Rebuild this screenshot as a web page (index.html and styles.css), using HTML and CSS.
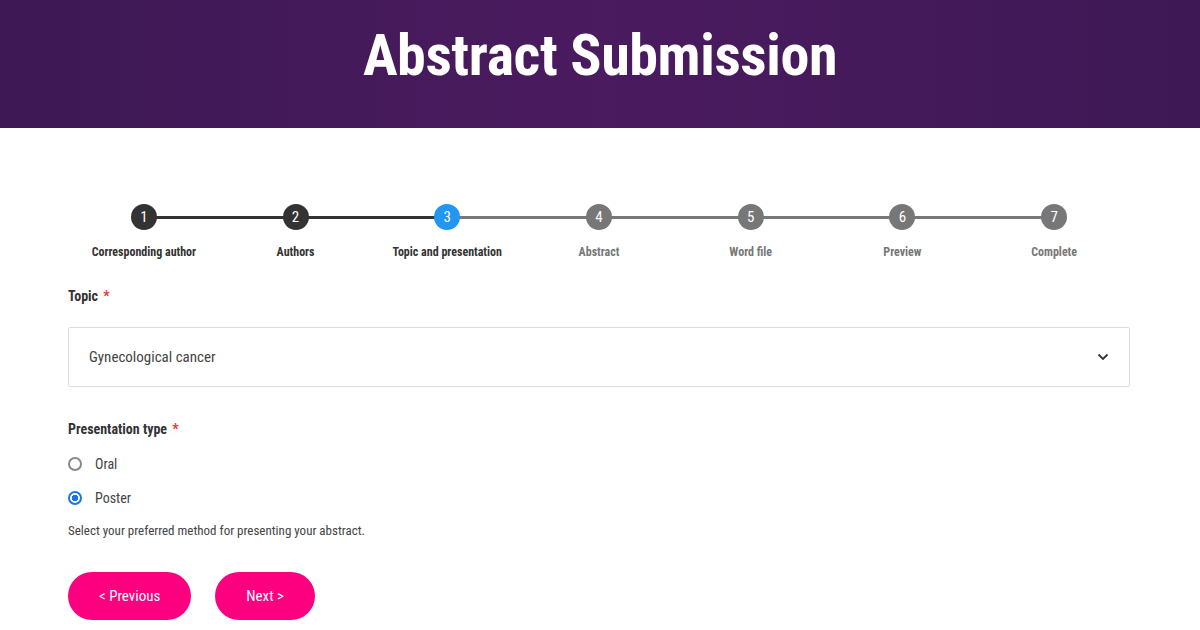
FILE: index.html
```html
<!DOCTYPE html>
<html lang="en">
<head>
  <meta charset="UTF-8" />
  <title>Abstract Submission</title>
  <link rel="stylesheet" href="styles.css">
</head>
<body>

  <header class="page-header">
    <h1>Abstract Submission</h1>
  </header>

  <main class="content">
    <ol class="stepper">
      <li class="step done"><span class="dot">1</span><span class="label">Corresponding author</span></li>
      <li class="step done"><span class="dot">2</span><span class="label">Authors</span></li>
      <li class="step active"><span class="dot">3</span><span class="label">Topic and presentation</span></li>
      <li class="step"><span class="dot">4</span><span class="label">Abstract</span></li>
      <li class="step"><span class="dot">5</span><span class="label">Word file</span></li>
      <li class="step"><span class="dot">6</span><span class="label">Preview</span></li>
      <li class="step"><span class="dot">7</span><span class="label">Complete</span></li>
    </ol>

    <div class="field">
      <label class="field-label">Topic <span class="req">*</span></label>
      <div class="select">
        <span>Gynecological cancer</span>
        <svg width="12" height="8" viewBox="0 0 12 8"><path d="M1.5 1.5 L6 6 L10.5 1.5" fill="none" stroke="#333" stroke-width="1.8"/></svg>
      </div>
    </div>

    <div class="field">
      <label class="field-label">Presentation type <span class="req">*</span></label>
      <label class="radio"><span class="radio-dot"></span>Oral</label>
      <label class="radio"><span class="radio-dot checked"></span>Poster</label>
      <p class="help">Select your preferred method for presenting your abstract.</p>
    </div>

    <div class="buttons">
      <button class="btn">&lt; Previous</button>
      <button class="btn">Next &gt;</button>
    </div>
  </main>

</body>
</html>
```

FILE: styles.css
```css
body {
  margin: 0;
  background: #fff;
  font-family: 'Roboto Condensed', Roboto, sans-serif;
  font-stretch: condensed;
  color: #333;
}

.page-header {
  height: 128px;
  box-sizing: border-box;
  padding-bottom: 18px;
  background: linear-gradient(to right, #3d1854, #4a1b5f 50%, #3e1855);
  display: flex;
  align-items: center;
  justify-content: center;
}

.page-header h1 {
  margin: 0;
  color: #fff;
  font-size: 58px;
  font-weight: 700;
  letter-spacing: -0.4px;
}

.content {
  padding: 76px 70px 0 68px;
}

.stepper {
  list-style: none;
  margin: 0 0 29px;
  padding: 0;
  display: grid;
  grid-template-columns: repeat(7, 1fr);
}

.step {
  position: relative;
  display: flex;
  flex-direction: column;
  align-items: center;
  gap: 15px;
  color: #777;
}

.step::before {
  content: "";
  position: absolute;
  top: 12px;
  left: -50%;
  right: 50%;
  height: 3px;
  background: #777;
}

.step:first-child::before {
  display: none;
}

.step.done::before,
.step.active::before {
  background: #333;
}

.dot {
  position: relative;
  z-index: 1;
  width: 26px;
  height: 26px;
  border-radius: 50%;
  background: #777;
  color: #fff;
  font-size: 15px;
  line-height: 26px;
  text-align: center;
}

.done .dot {
  background: #333;
}

.active .dot {
  background: #2196f3;
}

.label {
  font-size: 12px;
  font-weight: 700;
}

.done .label,
.active .label {
  color: #333;
}

.field {
  margin-bottom: 34px;
}

.field-label {
  display: block;
  font-size: 14px;
  font-weight: 700;
  color: #333;
  margin-bottom: 23px;
}

.req {
  color: #e53935;
  margin-left: 2px;
}

.select {
  height: 58px;
  border: 1px solid #ddd;
  border-radius: 2px;
  display: flex;
  align-items: center;
  justify-content: space-between;
  padding: 0 20px;
  font-size: 15px;
  color: #444;
}

.radio {
  display: flex;
  align-items: center;
  gap: 13px;
  font-size: 14px;
  color: #444;
  height: 20px;
  margin-bottom: 14px;
  margin-top: -6px;
}

.radio + .radio {
  margin-top: 0;
}

.radio-dot {
  width: 10px;
  height: 10px;
  border: 2px solid #888;
  border-radius: 50%;
}

.radio-dot.checked {
  border-color: #1a73e8;
  background: radial-gradient(circle, #1a73e8 0 3px, #fff 3.5px);
}

.help {
  margin: 15px 0 0;
  font-size: 13px;
  color: #444;
}

.buttons {
  display: flex;
  gap: 24px;
  margin-top: 6px;
}

.btn {
  height: 48px;
  padding: 0 31px;
  border: none;
  border-radius: 24px;
  background: #fc0080;
  color: #fff;
  font-family: inherit;
  font-stretch: condensed;
  font-size: 15px;
  cursor: pointer;
}
```
